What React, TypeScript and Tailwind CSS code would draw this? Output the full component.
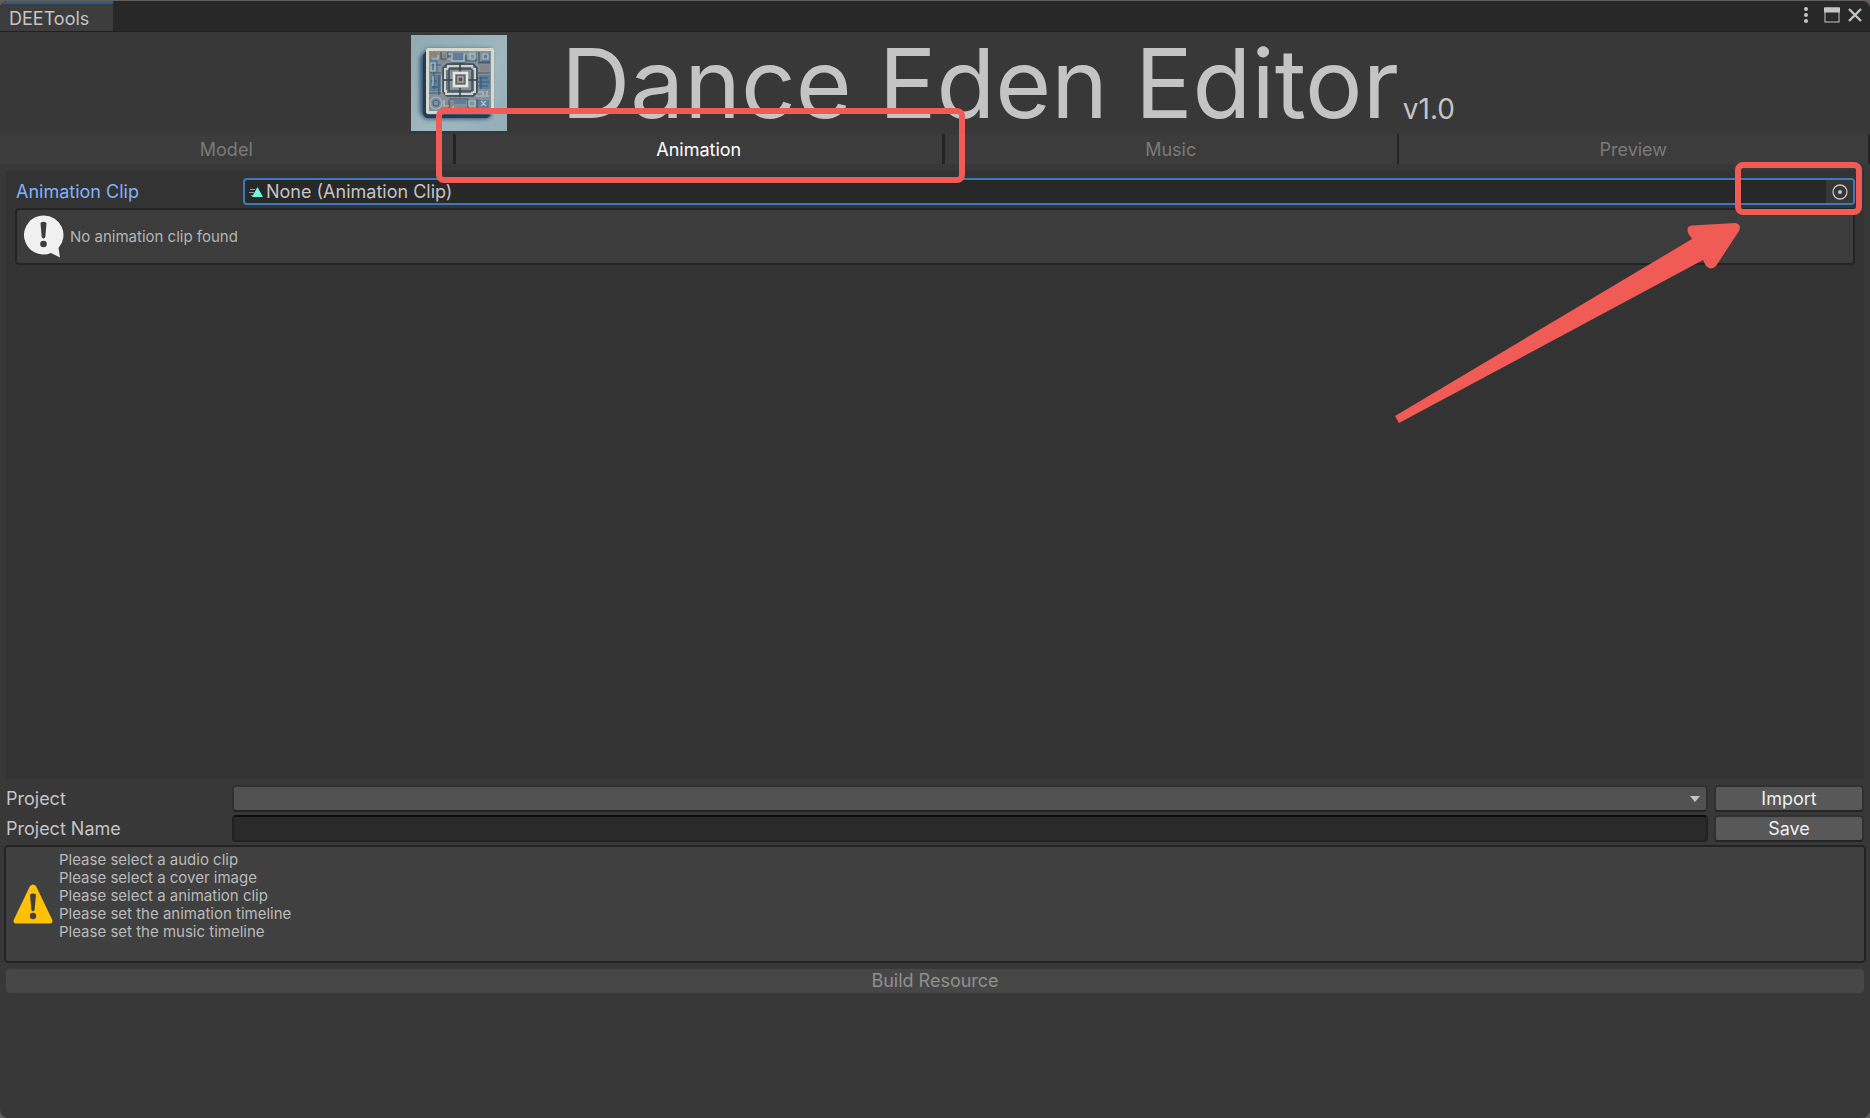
import { useState } from "react";

const tabs = [
  { name: "Model", size: "flex-[455] border-r-3" },
  { name: "Animation", size: "flex-[489] border-r-3" },
  { name: "Music", size: "flex-[454] border-r-2" },
  { name: "Preview", size: "flex-[472] border-r-2" },
];

const warnings = [
  "Please select a audio clip",
  "Please select a cover image",
  "Please select a animation clip",
  "Please set the animation timeline",
  "Please set the music timeline",
];

function Logo() {
  return (
    <svg viewBox="0 0 96 96" className="size-24 shrink-0" aria-hidden="true">
      <defs>
        <linearGradient id="sky" x1="0" y1="0" x2="1" y2="1">
          <stop offset="0" stopColor="#8fa9b3" />
          <stop offset="0.6" stopColor="#a0b7bf" />
          <stop offset="1" stopColor="#94adb6" />
        </linearGradient>
        <filter id="soft" x="-20%" y="-20%" width="140%" height="140%">
          <feGaussianBlur stdDeviation="2" />
        </filter>
      </defs>
      <rect width="96" height="96" fill="url(#sky)" />
      <path d="M9 22L16 14H80V82L74 84H14L9 78Z" fill="#35536e" filter="url(#soft)" />
      <path d="M12 20L16 15V80H80L76 83H15L12 79Z" fill="#223c55" />
      <rect x="15" y="13" width="68" height="66" rx="2" fill="#d9d8cc" />
      <rect x="18" y="16" width="62" height="60" fill="#81909a" />
      <g fill="#5d7f9b">
        <rect x="19" y="24" width="8" height="14" />
        <rect x="19" y="40" width="11" height="16" />
        <rect x="40" y="18" width="14" height="7" />
        <rect x="68" y="40" width="11" height="14" />
        <rect x="66" y="65" width="12" height="10" />
        <rect x="43" y="65" width="12" height="4" />
        <rect x="71" y="18" width="8" height="9" />
      </g>
      <g fill="#8b8580">
        <rect x="19" y="17" width="9" height="5" />
        <rect x="29" y="19" width="6" height="8" />
        <rect x="34" y="67" width="8" height="8" />
        <rect x="46" y="71" width="10" height="4" />
        <rect x="69" y="30" width="9" height="6" />
      </g>
      <g fill="none" stroke="#46586a" strokeWidth="1.2">
        <path d="M30 17V24H37V17M37 21H41M55 18V26H65V18M68 17V27H79M67 28H79M19 38H30M23 38V54M28 40V60M18 58H30M38 65V75M57 64V75M66 64V75M67 38H79M70 42V54M38 64H57M40 28H55M19 30H30" />
        <path d="M66 43H77M67 47H78M67 51H77M20 46H26M21 52H27" stroke="#365a7b" />
      </g>
      <g fill="none" stroke="#bac4c5" strokeWidth="1.2">
        <path d="M37 19H41V26H53V19H56M36 24H40M59 19H64V24H59ZM72 19H77V24H72ZM20 28H24V36H20ZM31 40V58M22 41V51M67 57H72V60M76 56V60M65 61H78M58 66H64V71H58ZM70 66L75 71M75 66L70 71M33 65V71H38M42 71V75M21 24H27V20" />
        <circle cx="61" cy="21" r="4" stroke="#86aebf" />
        <circle cx="25" cy="68" r="6" stroke="#a3b4bb" />
        <circle cx="25" cy="68" r="3" stroke="#456987" />
      </g>
      <path d="M36 29H62L66 33V57L62 61H36L32 57V33Z" fill="#657788" stroke="#404a54" strokeWidth="1.6" />
      <path d="M37 31H61V34H64V57H61V59H35V56H34V34H37Z" fill="none" stroke="#d0d1c8" strokeWidth="2" />
      <rect x="38" y="34" width="23" height="22" fill="#82909a" stroke="#414b55" strokeWidth="1.4" />
      <path d="M49 28V37M49 53V62M32 45H42M57 45H67" stroke="#39434c" strokeWidth="1.6" />
      <rect x="43" y="38" width="13" height="13" fill="#62666a" stroke="#e7e5dc" strokeWidth="2.6" />
      <rect x="47" y="42" width="5" height="5" fill="#4a4f56" stroke="#bab8b1" strokeWidth="1.2" />
    </svg>
  );
}

function InfoIcon() {
  return (
    <svg viewBox="0 0 40 43" className="h-[43px] w-10 shrink-0" aria-hidden="true">
      <path
        d="M19.500 0.500A19.500 19.500 0 1 0 27 38L36 42.500L34.500 33A19.500 19.500 0 0 0 19.500 0.500Z"
        fill="#f0f0f0"
      />
      <path d="M16.500 8Q19.500 5.500 22.500 8L21.300 22Q19.500 25 17.700 22Z" fill="#3c3c3c" />
      <circle cx="19.500" cy="29" r="3.300" fill="#3c3c3c" />
    </svg>
  );
}

function WarningIcon() {
  return (
    <svg viewBox="0 0 40 40" className="size-10 shrink-0" aria-hidden="true">
      <path
        d="M17 2Q20 -1 23 2L39.300 36Q40 39.500 37 39.500H3Q0 39.500 0.700 36Z"
        fill="#ffc107"
      />
      <path d="M17 10.500Q20 8.500 23 10.500L21.600 26Q20 28.500 18.400 26Z" fill="#404040" />
      <circle cx="20" cy="32" r="3.200" fill="#404040" />
    </svg>
  );
}

function ClipIcon() {
  return (
    <svg viewBox="0 0 14 12" className="h-3 w-3.5 shrink-0" aria-hidden="true">
      <path d="M1 3.500H6M0 6.500H5M2 9.500H4" stroke="#8b9a97" strokeWidth="1" />
      <path d="M8.500 1L14 11H3Z" fill="#70f7dc" />
    </svg>
  );
}

function Arrow() {
  return (
    <svg
      viewBox="0 0 346 202"
      className="pointer-events-none absolute top-[222px] right-[129px] h-[202px] w-[346px]"
      aria-hidden="true"
    >
      <path
        d="M0 193L297 16L293 10Q291 3 297 2.500L340 0Q347 1 344 8L321 43Q316 48 311 43L308 37L4 200Z"
        fill="#f05b55"
      />
    </svg>
  );
}

function App() {
  const [active, setActive] = useState("Animation");
  const [projectName, setProjectName] = useState("");

  return (
    <div className="min-h-screen bg-[#625f5b] pt-px font-['Inter',sans-serif] text-lg leading-6 text-[#c4c4c4]">
      <div className="relative flex min-h-[calc(100vh-1px)] flex-col overflow-hidden rounded-lg bg-[#383838]">
        <header className="flex h-[31px] items-stretch justify-between border-b border-[#202020] bg-[#282828]">
          <div className="flex items-end border-t-3 border-[#2c5d87] bg-[#3c3c3c] pr-6 pl-[9px]">
            DEETools
          </div>
          <div className="flex items-center gap-2 pr-2 pb-0.5">
            <button type="button" aria-label="Menu" className="mr-2">
              <svg viewBox="0 0 4 16" className="h-4 w-1" fill="#c4c4c4">
                <circle cx="2" cy="2" r="2" />
                <circle cx="2" cy="8" r="2" />
                <circle cx="2" cy="14" r="2" />
              </svg>
            </button>
            <button type="button" aria-label="Maximize">
              <svg viewBox="0 0 16 16" className="size-4" fill="none" stroke="#c4c4c4">
                <rect x="1" y="1" width="14" height="14" />
                <path d="M0 3H16" strokeWidth="5" />
              </svg>
            </button>
            <button type="button" aria-label="Close">
              <svg viewBox="0 0 14 14" className="size-3.5" fill="none" stroke="#c4c4c4" strokeWidth="2.400">
                <path d="M1 1L13 13M13 1L1 13" />
              </svg>
            </button>
          </div>
        </header>

        <div className="flex justify-center py-[3px] pr-1">
          <Logo />
          <h1 className="ml-[54px] text-[96px] leading-24 whitespace-nowrap">Dance Eden Editor</h1>
          <span className="ml-1 self-end pb-1 text-[28px] leading-9">v1.0</span>
        </div>

        <div role="tablist" className="flex h-[30px] bg-[#3c3c3c]">
          {tabs.map((tab) => (
            <button
              key={tab.name}
              type="button"
              role="tab"
              aria-selected={active === tab.name}
              onClick={() => setActive(tab.name)}
              className={`border-[#232323] pt-0.5 ${tab.size} ${active === tab.name ? "text-white" : "text-[#7a7a7a]"}`}
            >
              {tab.name}
            </button>
          ))}
        </div>

        <main className="mx-1.5 mt-1.5 flex-1 bg-[#333] px-[9px] pt-2">
          <div className="flex items-center">
            <label htmlFor="clip" className="w-[228px] pl-px text-[#7fb2fb]">
              Animation Clip
            </label>
            <div className="flex h-[27px] flex-1 items-center overflow-hidden rounded border-2 border-[#3a79bb] bg-[#282828] pl-1">
              <ClipIcon />
              <input
                id="clip"
                readOnly
                value="None (Animation Clip)"
                className="min-w-0 flex-1 pt-px pl-[3px] outline-none"
              />
              <button
                type="button"
                aria-label="Select animation clip"
                className="flex h-full w-[27px] items-center justify-center bg-[#373737]"
              >
                <svg viewBox="0 0 16 16" className="size-4" fill="none" stroke="#c4c4c4">
                  <circle cx="8" cy="8" r="7" strokeWidth="1.300" />
                  <circle cx="8" cy="8" r="2" fill="#c4c4c4" stroke="none" />
                </svg>
              </button>
            </div>
          </div>
          <div className="mt-[3px] flex h-[57px] items-center gap-1.5 rounded border-2 border-[#232323] bg-[#3c3c3c] px-[7px] text-[15px] text-[#b4b4b4]">
            <InfoIcon />
            <p>No animation clip found</p>
          </div>
        </main>

        <footer className="px-1 pt-1.5 pb-[125px]">
          <div className="flex items-center pr-0.5">
            <label htmlFor="project" className="w-[228px] pl-0.5">
              Project
            </label>
            <div className="relative flex-1">
              <select
                id="project"
                className="block h-[27px] w-full appearance-none rounded border-2 border-[#303030] border-b-[#242424] bg-[#515151] px-2"
              />
              <svg viewBox="0 0 10 6" className="pointer-events-none absolute top-[11px] right-2 h-1.5 w-2.5" fill="#c4c4c4">
                <path d="M0 0H10L5 6Z" />
              </svg>
            </div>
            <button
              type="button"
              className="ml-1.5 h-[27px] w-[150px] rounded border-2 border-[#303030] border-b-[#242424] bg-[#585858] text-[#eee]"
            >
              Import
            </button>
          </div>
          <div className="mt-[3px] flex items-center pr-0.5">
            <label htmlFor="project-name" className="w-[228px] pl-0.5">
              Project Name
            </label>
            <input
              id="project-name"
              value={projectName}
              onChange={(e) => setProjectName(e.target.value)}
              className="h-[27px] min-w-0 flex-1 rounded border-2 border-[#212121] border-t-[#0d0d0d] bg-[#2a2a2a] px-1 outline-none"
            />
            <button
              type="button"
              className="ml-1.5 h-[27px] w-[150px] rounded border-2 border-[#303030] border-b-[#242424] bg-[#585858] text-[#eee]"
            >
              Save
            </button>
          </div>
          <div className="mt-[3px] flex items-center gap-1.5 rounded border-2 border-[#232323] bg-[#404040] px-[7px] pt-1 pb-5 text-[15px] leading-[18px] text-[#bababa]">
            <div className="pt-4">
              <WarningIcon />
            </div>
            <ul>
              {warnings.map((warning) => (
                <li key={warning}>{warning}</li>
              ))}
            </ul>
          </div>
          <div className="px-0.5 pt-1.5">
            <button
              type="button"
              disabled
              className="block h-6 w-full rounded bg-[#474747] text-[#8f8f8f]"
            >
              Build Resource
            </button>
          </div>
        </footer>

        <div className="pointer-events-none absolute top-[107px] left-[436px] h-[75px] w-[529px] rounded-lg border-6 border-[#f05b55]" />
        <div className="pointer-events-none absolute top-[161px] right-2 h-[53px] w-[127px] rounded-lg border-6 border-[#f05b55]" />
        <Arrow />
      </div>
    </div>
  );
}

export default App;
